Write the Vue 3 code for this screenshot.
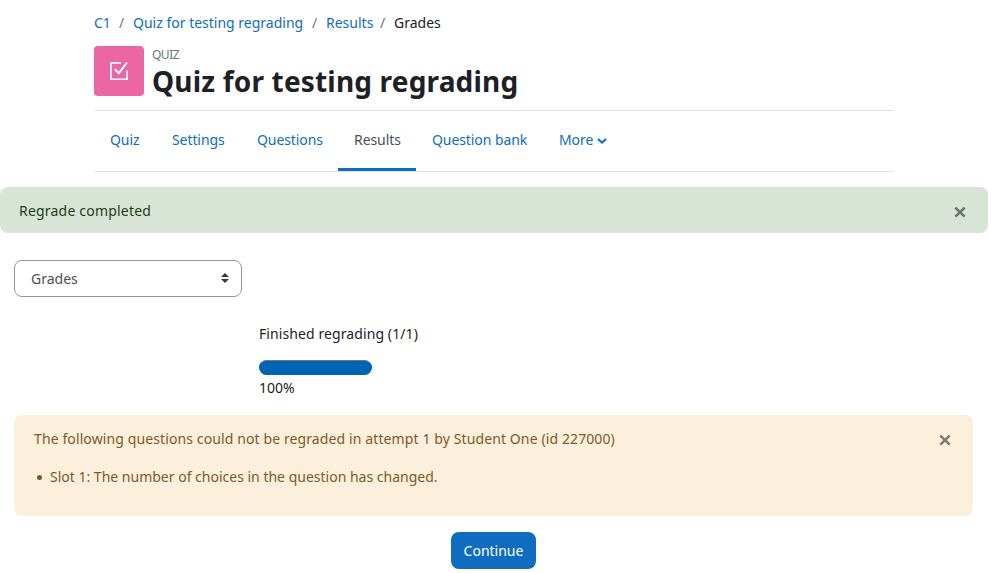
<script setup>
const crumbs = [
  { text: 'C1', w: 17 },
  { text: 'Quiz for testing regrading', w: 171 },
  { text: 'Results', w: 46 },
  { text: 'Grades', w: 47 },
]
const tabs = [
  { text: 'Quiz', w: 62 },
  { text: 'Settings', w: 85 },
  { text: 'Questions', w: 97 },
  { text: 'Results', w: 78, active: true },
  { text: 'Question bank', w: 127 },
  { text: 'More', w: 82, more: true },
]
</script>

<template>
  <div class="page">
    <header class="top">
      <nav class="crumbs">
        <template v-for="(c, i) in crumbs" :key="c.text">
          <span v-if="i" class="sep">/</span>
          <a :class="{ current: i === crumbs.length - 1 }" :style="{ width: c.w + 'px' }">{{ c.text }}</a>
        </template>
      </nav>
      <div class="heading">
        <div class="activity">
          <svg width="20" height="20" viewBox="0 0 20 20" fill="none" stroke="#fff">
            <path d="M12 1.900H1.900v16.400h16.200V9.500" stroke-width="1.600" />
            <path d="M5.800 8.300l4 4L18 1.500" stroke-width="2" />
          </svg>
        </div>
        <div class="titles">
          <div class="kind">QUIZ</div>
          <h1>Quiz for testing regrading</h1>
        </div>
      </div>
      <nav class="tabs">
        <a v-for="t in tabs" :key="t.text" class="tab" :class="{ active: t.active }" :style="{ width: t.w + 'px' }">
          <span>{{ t.text }}</span>
          <svg v-if="t.more" class="chev" width="10" height="6" viewBox="0 0 10 6" fill="none" stroke="currentColor" stroke-width="2.100">
            <path d="M1 1l4 3.600L9 1" />
          </svg>
        </a>
      </nav>
    </header>

    <div class="alert success">
      <span class="done">Regrade completed</span>
      <svg class="close" width="12" height="12" viewBox="0 0 12 12"><path d="M1.300 1.700l9.400 9M10.700 1.700l-9.400 9" /></svg>
    </div>

    <div class="select">
      <span>Grades</span>
      <svg class="arrows" width="8" height="10" viewBox="0 0 8 10" fill="#343a40"><path d="M0 4L4 0l4 4zM0 6h8L4 10z" /></svg>
    </div>

    <div class="progress">
      <div class="status">Finished regrading (1/1)</div>
      <div class="bar"></div>
      <div class="percent">100%</div>
    </div>

    <div class="alert warning">
      <div>
        <p class="lead">The following questions could not be regraded in attempt 1 by Student One (id 227000)</p>
        <ul>
          <li>Slot 1: The number of choices in the question has changed.</li>
        </ul>
      </div>
      <svg class="close" width="12" height="12" viewBox="0 0 12 12"><path d="M1.300 1.700l9.400 9M10.700 1.700l-9.400 9" /></svg>
    </div>

    <button class="continue">Continue</button>
  </div>
</template>

<style>
body { background: #fff; }
</style>

<style scoped>
.page {
  box-sizing: border-box;
  width: 991px;
  height: 573px;
  overflow: hidden;
  font: 14px/22px "Segoe UI", "Noto Sans", sans-serif;
  color: #1d2125;
  white-space: nowrap;
}
.top { width: 800px; margin-left: 94px; padding-top: 12px; }
a { color: #0f6cbf; }
.crumbs { display: flex; height: 22px; }
.sep { width: 22px; padding-left: 8px; box-sizing: border-box; color: #6a737b; }
.crumbs .current { color: #1d2125; }
.heading { display: flex; gap: 8px; height: 50px; margin-top: 12px; }
.activity {
  width: 50px;
  height: 50px;
  border-radius: 4px;
  background: #eb66a2;
  display: flex;
  align-items: center;
  justify-content: center;
}
.titles { padding-top: 1px; }
.kind { font-size: 12px; line-height: 16px; letter-spacing: -0.5px; color: #6a737b; }
h1 { margin: 0; font-size: 28px; line-height: 36px; font-weight: 700; letter-spacing: 0.18px; color: #1d2125; }
.tabs {
  display: flex;
  height: 60px;
  margin-top: 14px;
  border-top: 1px solid #dee2e6;
  border-bottom: 1px solid #dee2e6;
}
.tab {
  display: flex;
  align-items: center;
  gap: 4px;
  box-sizing: border-box;
  padding: 0 0 0 16px;
  border-bottom: 3px solid transparent;
  letter-spacing: -0.08px;
}
.tab.active { color: #495057; border-bottom-color: #0f6cbf; }
.chev { margin-top: 2px; }
.alert { display: flex; justify-content: space-between; box-sizing: border-box; border-radius: 8px; }
.close { stroke-width: 2.500; fill: none; }
.success {
  width: 988px;
  height: 46px;
  margin-top: 15px;
  padding: 13px 22px 0 19px;
  background: #d7e4d6;
  color: #1c3f19;
}
.done { letter-spacing: 0.2px; }
.success .close { margin-top: 6px; stroke: #6b726b; }
.select {
  display: flex;
  align-items: center;
  justify-content: space-between;
  box-sizing: border-box;
  width: 228px;
  height: 37px;
  margin: 27px 0 0 14px;
  padding: 0 12px 0 16px;
  border: 1px solid #8f959e;
  border-radius: 8px;
  color: #495057;
}
.arrows { margin-bottom: 1px; }
.progress { margin-left: 259px; padding-top: 26px; }
.status { letter-spacing: 0.09px; }
.bar {
  box-sizing: border-box;
  width: 113px;
  height: 15px;
  margin-top: 15px;
  border: 1px solid #0064b4;
  border-top-color: #767676;
  border-radius: 7.500px;
  background: #0064b4;
}
.percent { margin-top: 2px; }
.warning {
  width: 959px;
  height: 101px;
  margin: 16px 0 0 14px;
  padding: 13px 22px 0 20px;
  background: #fcefdc;
  color: #7d5a29;
}
.warning .close { margin-top: 6px; stroke: #7e786e; }
.lead { margin: 0; letter-spacing: 0.11px; }
ul { margin: 16px 0 0; padding: 0 0 0 3px; list-style: none; }
li { display: flex; align-items: center; gap: 8px; }
li::before {
  content: "";
  width: 5px;
  height: 5px;
  margin-top: 1px;
  border-radius: 50%;
  background: currentColor;
}
.continue {
  display: block;
  width: 85px;
  height: 37px;
  margin: 16px 0 0 451px;
  padding: 0;
  border: 0;
  border-radius: 8px;
  background: #0f6cbf;
  color: #fff;
  font: inherit;
}
</style>
